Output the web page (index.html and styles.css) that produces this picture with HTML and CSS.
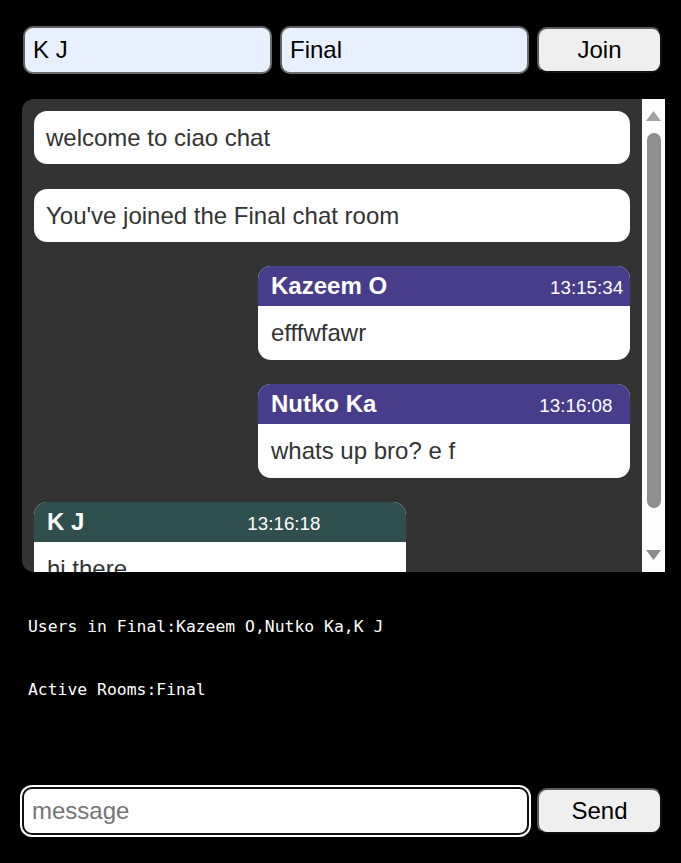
FILE: index.html
```html
<!DOCTYPE html>
<html lang="en">
<head>
<meta charset="utf-8">
<title>ciao chat</title>
<link rel="stylesheet" href="styles.css">
</head>
<body>
<div class="app">
  <form class="join-row">
    <input class="field" type="text" value="K J">
    <input class="field" type="text" value="Final">
    <button class="btn" type="button">Join</button>
  </form>

  <div class="chat">
    <div class="messages">
      <div class="bubble">welcome to ciao chat</div>
      <div class="bubble">You've joined the Final chat room</div>
      <div class="msg other">
        <div class="msg-head"><span class="name">Kazeem O</span><span class="time">13:15:34</span></div>
        <div class="msg-body">efffwfawr</div>
      </div>
      <div class="msg other">
        <div class="msg-head"><span class="name">Nutko Ka</span><span class="time">13:16:08</span></div>
        <div class="msg-body">whats up bro? e f</div>
      </div>
      <div class="msg self">
        <div class="msg-head"><span class="name">K J</span><span class="time">13:16:18</span></div>
        <div class="msg-body">hi there</div>
      </div>
    </div>
    <div class="scrollbar">
      <svg class="arrow up" width="15" height="10" viewBox="0 0 15 10"><polygon points="7.5,0 15,10 0,10"/></svg>
      <div class="thumb"></div>
      <div class="spacer"></div>
      <svg class="arrow down" width="15" height="10" viewBox="0 0 15 10"><polygon points="0,0 15,0 7.5,10"/></svg>
    </div>
  </div>

  <div class="info">
    <p>Users in Final:Kazeem O,Nutko Ka,K J</p>
    <p class="rooms">Active Rooms:Final</p>
  </div>

  <form class="send-row">
    <input class="field message" type="text" placeholder="message">
    <button class="btn" type="button">Send</button>
  </form>
</div>
</body>
</html>
```

FILE: styles.css
```css
html, body {
  margin: 0;
  padding: 0;
  background: #000;
}

body {
  font-family: "Liberation Sans", Arial, sans-serif;
  width: 681px;
  height: 863px;
  overflow: hidden;
}

.join-row,
.send-row {
  display: flex;
  align-items: center;
  gap: 8px;
  margin: 0;
}

.join-row {
  padding: 26px 0 0 23px;
}

.field {
  box-sizing: border-box;
  width: 249px;
  height: 48px;
  margin: 0;
  padding: 0 8px;
  border: 2px solid #606060;
  border-bottom-color: #6c6c6c;
  border-right-color: #6c6c6c;
  border-radius: 10px;
  background: #e8f0fe;
  color: #000;
  font-family: "Liberation Sans", Arial, sans-serif;
  font-size: 24px;
  outline: none;
}

.btn {
  box-sizing: border-box;
  width: 125px;
  height: 46px;
  margin: 0;
  padding: 0;
  border-width: 2px;
  border-style: solid;
  border-color: #5a5a5a #111 #111 #5a5a5a;
  border-radius: 10px;
  background: #efefef;
  color: #000;
  font-family: "Liberation Sans", Arial, sans-serif;
  font-size: 24px;
}

.chat {
  display: flex;
  width: 643px;
  height: 473px;
  margin: 25px 0 0 22px;
  background: #333;
  border-radius: 12px 0 0 12px;
  overflow: hidden;
}

.messages {
  flex: 1;
  display: flex;
  flex-direction: column;
  gap: 24.3px;
  padding: 12px 12px 0;
  overflow: hidden;
  color: #333;
  font-size: 24px;
  line-height: 29.4px;
}

.bubble {
  flex: none;
  background: #fff;
  border-radius: 13px;
  padding: 12px;
}

.msg {
  flex: none;
  width: 372px;
  background: #fff;
  border-radius: 13px;
  overflow: hidden;
}

.msg.other {
  align-self: flex-end;
}

.msg.self {
  align-self: flex-start;
}

.msg-head {
  box-sizing: border-box;
  display: flex;
  align-items: baseline;
  height: 40px;
  padding: 6px 13px 0;
  line-height: 28px;
  color: #fff;
  background: #483d8b;
  white-space: nowrap;
}

.msg.self .msg-head {
  background: #2f4f4f;
}

.name {
  font-weight: bold;
  font-size: 24px;
}

.time {
  font-size: 18.8px;
  margin-left: 163px;
}

.msg-body {
  padding: 12px 13px;
}

.scrollbar {
  flex: none;
  width: 23px;
  display: flex;
  flex-direction: column;
  align-items: center;
  background: #fdfdfd;
}

.arrow {
  flex: none;
  display: block;
}

.arrow.up {
  margin-top: 12px;
  fill: #a3a3a3;
}

.arrow.down {
  margin-bottom: 12px;
  fill: #8c8c8c;
}

.thumb {
  flex: none;
  width: 14px;
  height: 375px;
  margin-top: 12px;
  border-radius: 7px;
  background: #8f8f8f;
}

.spacer {
  flex: 1;
}

.info {
  padding-left: 28px;
  color: #fff;
  font-family: "DejaVu Sans Mono", "Liberation Mono", monospace;
  font-size: 16.4px;
  line-height: 20px;
}

.info p {
  margin: 45px 0 0;
}

.info p.rooms {
  margin-top: 43px;
}

.send-row {
  padding-left: 22px;
  margin-top: 87px;
}

.field.message {
  width: 507px;
  background: #fff;
  border: 2px solid #101010;
  box-shadow: 0 0 0 2px #fff;
}

.field.message::placeholder {
  color: #757575;
}
```
